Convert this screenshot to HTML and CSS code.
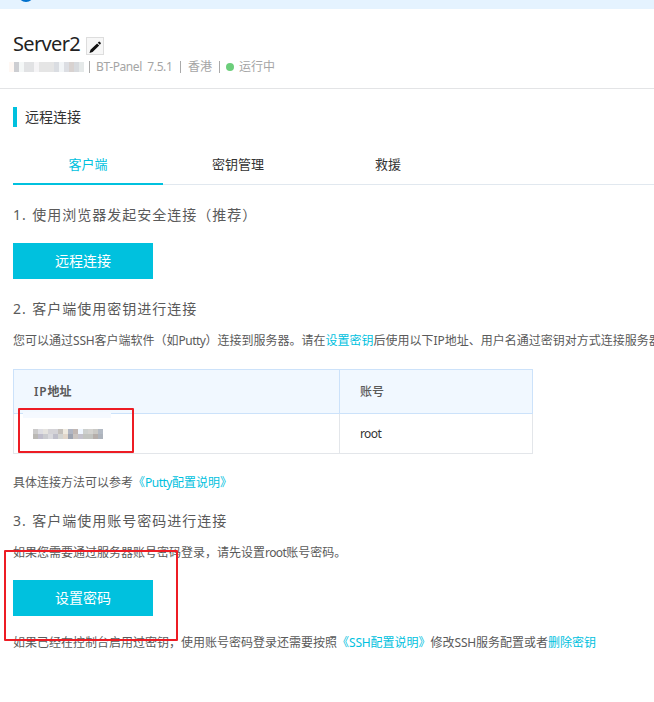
FILE: index.html
```html
<!DOCTYPE html>
<html lang="zh-CN">
<head>
<meta charset="utf-8">
<title>Server2</title>
<link rel="stylesheet" href="styles.css">
</head>
<body>
<div class="notice"><span class="notice-icon"></span></div>
<header class="header">
  <div class="title-row">
    <h1 class="title">Server2</h1>
    <button class="edit" aria-label="编辑"><svg width="16" height="16" viewBox="0 0 16 16"><path d="M2.5 15l1-3.3 6.6-6.2 2.1 2.1-6.6 6.3zM10.8 4.8l1-1q.6-.4 1.1.1l.8.8q.5.6 0 1.1l-.9 1z" fill="#111"/></svg></button>
  </div>
  <div class="meta">
    <svg class="mask" width="75" height="10" shape-rendering="crispEdges"><path fill="#fff8f4" d="M0 0h5v10H0z"/><path fill="#cdced2" d="M5 0h5v10H5z"/><path fill="#f4f7f7" d="M10 0h5v10h-5z"/><path fill="#e1e2e4" d="M15 0h10v10H15z"/><path fill="#f5f4f6" d="M25 0h5v10h-5z"/><path fill="#e5e5e5" d="M30 0h15v10H30z"/><path fill="#dadde2" d="M45 0h5v10h-5z"/><path fill="#f2f5f7" d="M50 0h5v10h-5z"/><path fill="#dcdee3" d="M55 0h5v10h-5z"/><path fill="#d8d2d0" d="M60 0h5v10h-5z"/><path fill="#d7dade" d="M65 0h5v10h-5z"/><path fill="#e5e9e9" d="M70 0h5v10h-5z"/></svg>
    <i class="sep"></i><span class="panel">BT-Panel&nbsp; 7.5.1</span><i class="sep sep-mid"></i><span>香港</span><i class="sep sep-end"></i><i class="dot"></i><span>运行中</span>
  </div>
</header>
<main class="main">
  <h2 class="section">远程连接</h2>
  <nav class="tabs"><a class="tab active">客户端</a><a class="tab">密钥管理</a><a class="tab">救援</a></nav>
  <h3 class="step">1. 使用浏览器发起安全连接（推荐）</h3>
  <button class="btn">远程连接</button>
  <h3 class="step step-key">2. 客户端使用密钥进行连接</h3>
  <p class="text">您可以通过<span class="ssh">SSH</span>客户端软件（如<span class="tight">Putty</span>）连接到服务器。请在<a>设置密钥</a>后使用以下<span class="ip">IP</span>地址、用户名通过密钥对方式连接服务器。</p>
  <table class="table">
    <thead><tr><th class="col-ip"><span class="ip-head">IP</span>地址</th><th class="col-user">账号</th></tr></thead>
    <tbody><tr><td class="cell-ip"><svg class="address" width="70" height="10" shape-rendering="crispEdges">
      <path fill="#cbcaca" d="M0 0h5v5H0z"/><path fill="#dddde2" d="M5 0h5v5H5z"/><path fill="#e5e3df" d="M10 0h5v5h-5z"/><path fill="#d4d3d7" d="M15 0h10v5H15z"/><path fill="#c4c0bb" d="M25 0h5v5h-5z"/><path fill="#eee9df" d="M30 0h5v5h-5z"/><path fill="#b1b6c3" d="M35 0h5v5h-5z"/><path fill="#c1b7b3" d="M40 0h5v5h-5z"/><path fill="#f0f7ff" d="M45 0h5v5h-5z"/><path fill="#cdd0ce" d="M50 0h5v5h-5z"/><path fill="#d4d3d0" d="M55 0h5v5h-5z"/><path fill="#cac9c5" d="M60 0h5v5h-5z"/><path fill="#b3bac4" d="M65 0h5v5h-5z"/>
      <path fill="#bab8b4" d="M0 5h5v5H0z"/><path fill="#bfbdcb" d="M5 5h5v5H5z"/><path fill="#cacbcf" d="M10 5h5v5h-5z"/><path fill="#d9d9dd" d="M15 5h5v5h-5z"/><path fill="#bfbfca" d="M20 5h5v5h-5z"/><path fill="#d3d4d1" d="M25 5h5v5h-5z"/><path fill="#e1d6ca" d="M30 5h5v5h-5z"/><path fill="#9ea4b1" d="M35 5h5v5h-5z"/><path fill="#cac4c0" d="M40 5h5v5h-5z"/><path fill="#c4c2cc" d="M45 5h5v5h-5z"/><path fill="#c2c4c0" d="M50 5h10v5H50z"/><path fill="#b5aeaa" d="M60 5h5v5h-5z"/><path fill="#adb3bc" d="M65 5h5v5h-5z"/></svg><span class="tint"></span><span class="mark mark-ip"></span></td><td><span class="root">root</span></td></tr></tbody>
  </table>
  <p class="text">具体连接方法可以参考<a>《<span class="tight">Putty</span>配置说明》</a></p>
  <h3 class="step step-pass">3. 客户端使用账号密码进行连接</h3>
  <p class="text">如果您需要通过服务器账号密码登录，请先设置<span class="root">root</span>账号密码。</p>
  <div class="action"><button class="btn">设置密码</button><span class="mark mark-pass"></span></div>
  <p class="text">如果已经在控制台启用过密钥，使用账号密码登录还需要按照<a>《<span class="ssh">SSH</span>配置说明》</a>修改<span class="ssh">SSH</span>服务配置或者<a>删除密钥</a></p>
</main>
</body>
</html>
```
FILE: styles.css
```css
* { box-sizing: border-box; }
body {
  margin: 0;
  background: #fff;
  color: #5a5a5a;
  font: 12px/20px "Noto Sans", "Noto Sans CJK SC", sans-serif;
  overflow: hidden;
  white-space: nowrap;
}
h1, h2, h3, p { margin: 0; font-weight: 400; }
button { border: 0; padding: 0; font-family: inherit; }
a { color: #00c1de; }

.notice { height: 9px; padding-left: 18px; background: #e5f3ff; overflow: hidden; }
.notice-icon { display: block; width: 16px; height: 16px; margin-top: -14px; border-radius: 50%; background: #0070cc; }

.header { height: 80px; padding: 21px 0 0 13px; border-bottom: 1px solid #e3e4e6; }
.title-row { display: flex; height: 28px; }
.title { width: 73px; color: #222; font-size: 20px; line-height: 28px; letter-spacing: -.65px; }
.edit { width: 18px; height: 18px; margin-top: 7px; background: #f7f7f7; border: 1px solid #ddd; }
.edit svg { display: block; }
.meta { display: flex; align-items: center; height: 18px; margin-left: -4px; color: #a5a5a5; }
.mask { flex: none; }
.sep { width: 1px; height: 12px; margin: 0 7px 0 5px; background: #aaa; }
.panel { width: 77px; margin-left: -1px; letter-spacing: -.4px; }
.sep-mid { margin: 0 7px; }
.sep-end { margin: 0 6px 0 7px; }
.dot { width: 8px; height: 8px; margin-right: 5px; border-radius: 50%; background: #6cce7b; }

.main { padding: 18px 0 0 13px; }
.section { height: 20px; padding-left: 8px; border-left: 4px solid #00c1de; color: #333; font-size: 14px; line-height: 20px; }
.tabs { display: flex; height: 40px; margin-top: 18px; border-bottom: 1px solid #e1e8ef; }
.tab { width: 150px; height: 40px; color: #333; font-size: 13px; line-height: 38px; text-align: center; }
.tab.active { color: #00c1de; border-bottom: 2px solid #00c1de; }
.step { height: 20px; margin-top: 20px; font-size: 14px; line-height: 20px; letter-spacing: 1px; word-spacing: .8px; }
.btn { display: block; width: 140px; height: 36px; background: #00c1de; color: #fff; font-size: 14px; line-height: 36px; }
.step + .btn { margin-top: 18px; }
.step-key { margin-bottom: 12px; }
.text { height: 20px; }
.tight { letter-spacing: -.5px; }
.ssh { letter-spacing: -.2px; }
.ip { letter-spacing: -.1px; }
.ip-head { letter-spacing: .8px; }
.root { letter-spacing: -.6px; }

.table { width: 520px; margin: 18px 0 19px; border-collapse: collapse; table-layout: fixed; }
.table th { height: 44px; padding: 0 20px; background: #f1f8ff; border: 1px solid #cce2fa; text-align: left; font-weight: 500; }
.table th.col-ip { width: 326px; font-weight: 600; }
.table td { height: 40px; padding: 0 20px; border: 1px solid #e3e6ea; color: #333; }
.table td.cell-ip { position: relative; padding-left: 19px; }
.address { display: block; }
.tint { position: absolute; left: 9px; top: -2px; width: 88px; height: 6px; background: #f5f9ff; }

.step-pass { margin: 18px 0 12px; }
.action { position: relative; margin: 17px 0; }
.mark { position: absolute; border: 2px solid #ed1c24; border-radius: 1px; pointer-events: none; }
.mark-ip { left: 4px; top: -6px; width: 116px; height: 45px; }
.mark-pass { left: -9px; top: -30px; width: 174px; height: 91px; }
```
